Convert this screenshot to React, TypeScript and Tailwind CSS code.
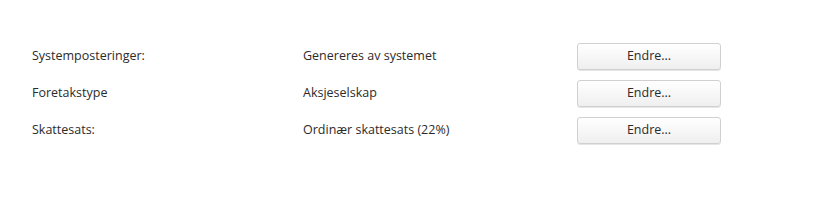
import React from "react";

const rows = [
  { label: "Systemposteringer:", value: "Genereres av systemet" },
  { label: "Foretakstype", value: "Aksjeselskap" },
  { label: "Skattesats:", value: "Ordinær skattesats (22%)" },
];

export default function App() {
  return (
    <div className="w-[816px] h-[219px] bg-white pl-[32px] pt-[43px] text-[#2b2b2b] text-[12.5px]" style={{ fontFamily: '"Open Sans", sans-serif' }}>
      <div className="flex flex-col gap-[10px]">
        {rows.map((r) => (
          <div key={r.label} className="flex items-center h-[27px]">
            <div className="w-[271px]">{r.label}</div>
            <div className="w-[274px]">{r.value}</div>
            <button className="w-[144px] h-[27px] rounded-[3px] border border-[#d0d0d0] bg-gradient-to-b from-white to-[#efefef] text-[#2b2b2b] text-[12.5px] shadow-[0_1px_0_#e6e6e6]">
              Endre...
            </button>
          </div>
        ))}
      </div>
    </div>
  );
}
